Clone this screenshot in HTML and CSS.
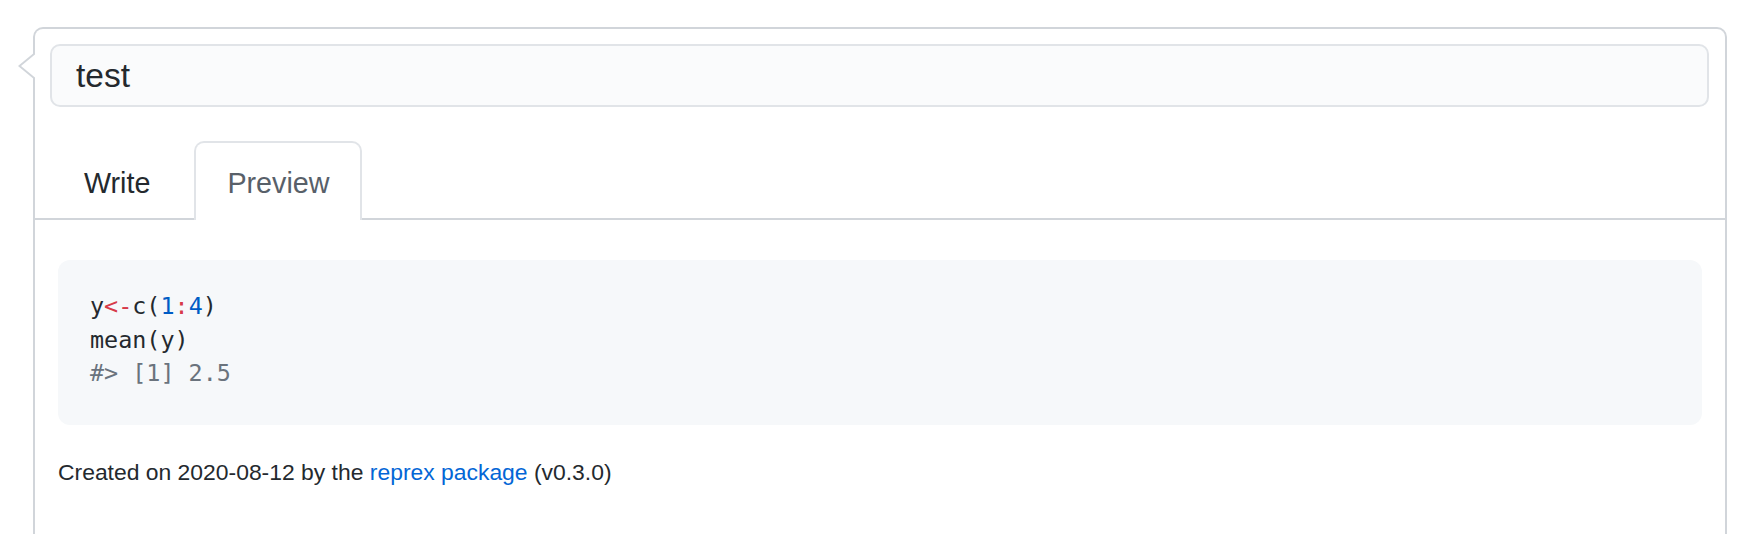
FILE: index.html
```html
<!DOCTYPE html>
<html>
	<head>
		<meta charset="UTF-8">
		<title>Comment preview</title>
		<link rel="stylesheet" href="styles.css">
	</head>
	<body>
		<div class="comment">
			<div class="comment-title">
				<div class="title-input">test</div>
			</div>
			<!--tabs-->
			<div class="tabnav">
				<a href="javascript:void(0);" class="tab">Write</a>
				<a href="javascript:void(0);" class="tab selected">Preview</a>
			</div>
			<div class="preview">
				<pre class="code"><span>y</span><span class="op">&lt;-</span><span>c(</span><span class="num">1</span><span class="op">:</span><span class="num">4</span><span>)</span>
mean(y)
<span class="out">#&gt; [1] 2.5</span></pre>
				<p class="created">Created on 2020-08-12 by the <a href="javascript:void(0);">reprex package</a> (v0.3.0)</p>
			</div>
		</div>
	</body>
</html>
```

FILE: styles.css
```css
html, body {
	margin: 0;
	padding: 0;
	background: #fff;
	overflow: hidden;
}
body {
	font-family: "Liberation Sans", Arial, sans-serif;
	color: #24292e;
}
a {
	text-decoration: none;
}
.comment {
	position: relative;
	width: 1694px;
	margin: 27px 0 0 33px;
	box-sizing: border-box;
	border: 2px solid #d1d5da;
	border-bottom: 0;
	border-radius: 10px 10px 0 0;
	background: #fff;
}
/* little arrow on the left side */
.comment::before,
.comment::after {
	content: "";
	position: absolute;
	top: 23px;
	width: 0;
	height: 0;
	border-style: solid;
	border-width: 14px 17px 14px 0;
}
.comment::before {
	left: -17px;
	border-color: transparent #d1d5da transparent transparent;
}
.comment::after {
	left: -14px;
	border-color: transparent #fff transparent transparent;
}
.comment-title {
	padding: 15px 16px 0 15px;
}
.title-input {
	height: 59px;
	line-height: 59px;
	padding: 0 24px;
	font-size: 33.5px;
	color: #24292e;
	background: #fafbfc;
	border: 2px solid #e1e4e8;
	border-radius: 10px;
}
.tabnav {
	display: flex;
	gap: 11px;
	margin-top: 34px;
	padding-left: 16px;
	border-bottom: 2px solid #d1d5da;
}
.tab {
	display: block;
	padding: 20px 31px 17px;
	line-height: 40px;
	font-size: 28.7px;
	color: #24292e;
	border: 2px solid transparent;
	border-bottom: 0;
	border-radius: 10px 10px 0 0;
	margin-bottom: -2px;
}
.tab.selected {
	color: #586069;
	background: #fff;
	border-color: #e1e4e8;
}
.preview {
	padding: 40px 23px 80px;
}
.code {
	margin: 0 0 30px 0;
	padding: 30px 32px 34px;
	background: #f6f8fa;
	border-radius: 12px;
	font-family: "DejaVu Sans Mono", "Liberation Mono", monospace;
	font-size: 23.4px;
	line-height: 33.5px;
	color: #24292e;
}
.code .op {
	color: #d73a49;
}
.code .num {
	color: #005cc5;
}
.code .out {
	color: #6a737d;
}
.created {
	margin: 0;
	font-size: 22.9px;
	line-height: 34px;
	color: #24292e;
}
.created a {
	color: #0366d6;
}
```
